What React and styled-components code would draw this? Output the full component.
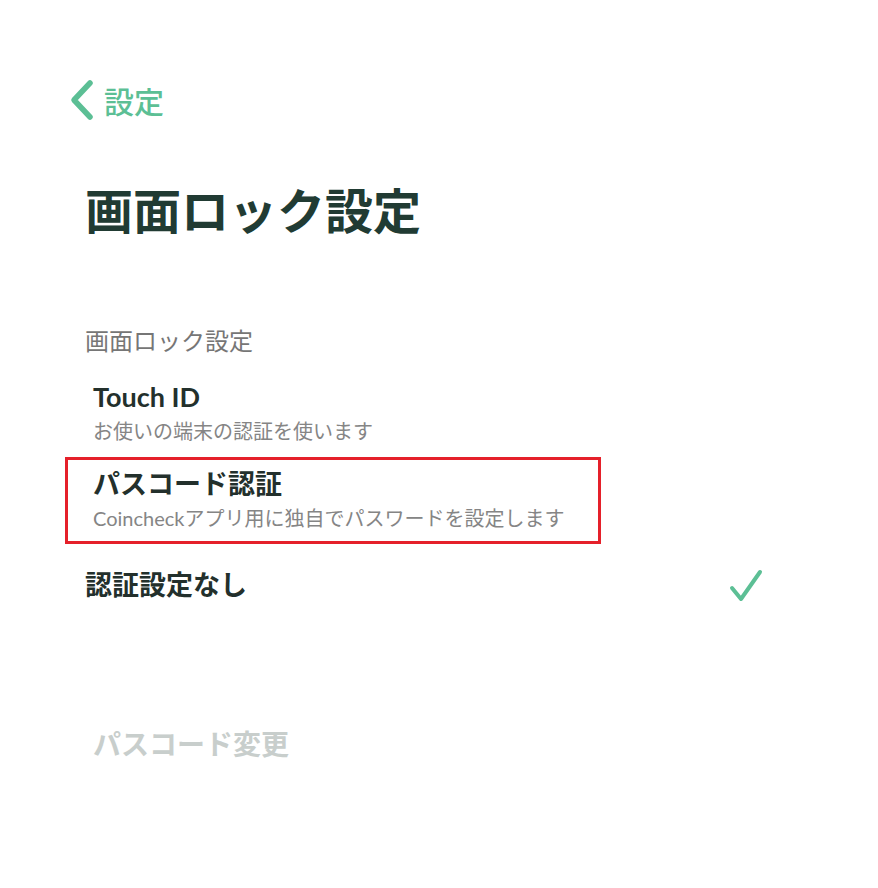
import React from 'react';
import styled, { createGlobalStyle } from 'styled-components';

const GlobalStyle = createGlobalStyle`
  body {
    margin: 0;
    background: #ffffff;
    font-family: Lato, "Noto Sans CJK JP", sans-serif;
  }
`;

const options = [
  { id: 'touch', title: 'Touch ID', sub: 'お使いの端末の認証を使います' },
  {
    id: 'passcode',
    title: 'パスコード認証',
    sub: 'Coincheckアプリ用に独自でパスワードを設定します',
    highlighted: true,
  },
];

export default function App() {
  return (
    <Page>
      <GlobalStyle />
      <NavBar>
        <svg width="28" height="42" viewBox="0 0 28 42">
          <path
            d="M22 4 L6 21 L22 38"
            fill="none"
            stroke="#5cbf95"
            strokeWidth="5.5"
            strokeLinecap="round"
            strokeLinejoin="round"
          />
        </svg>
        <BackLabel>設定</BackLabel>
      </NavBar>

      <Title>画面ロック設定</Title>

      <SectionHeader>画面ロック設定</SectionHeader>

      <OptionList>
        {options.map((o) => (
          <Option key={o.id} $highlighted={o.highlighted}>
            <OptionTitle>{o.title}</OptionTitle>
            <OptionSub>{o.sub}</OptionSub>
          </Option>
        ))}
      </OptionList>

      <SelectedRow>
        <SelectedTitle>認証設定なし</SelectedTitle>
        <svg width="36" height="36" viewBox="0 0 36 36">
          <path
            d="M4 22 L13 33 L32 6"
            fill="none"
            stroke="#5cbf95"
            strokeWidth="4"
            strokeLinecap="round"
            strokeLinejoin="round"
          />
        </svg>
      </SelectedRow>

      <DisabledItem>パスコード変更</DisabledItem>
    </Page>
  );
}

const Page = styled.div`
  width: 878px;
  min-height: 888px;
  padding-top: 78px;
  box-sizing: border-box;
`;

const NavBar = styled.div`
  display: flex;
  align-items: center;
  gap: 8px;
  height: 44px;
  padding-left: 68px;
`;

const BackLabel = styled.span`
  font-family: "Noto Sans CJK JP", sans-serif;
  font-size: 30px;
  font-weight: 500;
  color: #5cbf95;
  line-height: 44px;
`;

const Title = styled.h1`
  margin: 56px 0 0;
  padding-left: 85px;
  font-family: "Noto Sans CJK JP", sans-serif;
  font-size: 48px;
  font-weight: 700;
  line-height: 60px;
  color: #213b33;
`;

const SectionHeader = styled.div`
  margin-top: 87px;
  padding-left: 85px;
  font-family: "Noto Sans CJK JP", sans-serif;
  font-size: 24px;
  font-weight: 400;
  line-height: 30px;
  color: #767676;
`;

const OptionList = styled.div`
  display: flex;
  flex-direction: column;
  margin-top: 15px;
  padding-left: 65px;
`;

const Option = styled.div`
  width: 536px;
  box-sizing: border-box;
  padding: 7px 25px 9px;
  border: 3px solid ${(p) => (p.$highlighted ? '#e5202a' : 'transparent')};
`;

const OptionTitle = styled.div`
  font-family: Lato, "Noto Sans CJK JP", sans-serif;
  font-size: 27px;
  font-weight: 700;
  line-height: 34px;
  color: #23302c;
`;

const OptionSub = styled.div`
  margin-top: 3px;
  font-family: Lato, "Noto Sans CJK JP", sans-serif;
  font-size: 20px;
  font-weight: 400;
  line-height: 28px;
  color: #858585;
`;

const SelectedRow = styled.div`
  display: flex;
  align-items: center;
  justify-content: space-between;
  margin-top: 23px;
  padding: 0 114px 0 85px;
  height: 34px;
`;

const SelectedTitle = styled.div`
  font-family: "Noto Sans CJK JP", sans-serif;
  font-size: 27px;
  font-weight: 700;
  line-height: 34px;
  color: #23302c;
`;

const DisabledItem = styled.div`
  margin-top: 125px;
  padding-left: 93px;
  font-family: "Noto Sans CJK JP", sans-serif;
  font-size: 28px;
  font-weight: 700;
  line-height: 34px;
  color: #c8cecc;
`;
